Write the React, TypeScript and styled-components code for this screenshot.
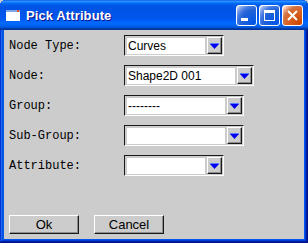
import React from "react";
import styled, { createGlobalStyle } from "styled-components";

const Global = createGlobalStyle`
  html, body { margin: 0; padding: 0; background: #cccccc; }
  body { width: 308px; height: 243px; overflow: hidden; }
`;

const Window = styled.div`
  width: 308px;
  height: 243px;
  box-sizing: border-box;
  display: flex;
  flex-direction: column;
  background: #0055ea;
  box-shadow: inset -1px -1px #00138c, inset 1px 1px #0831d9,
    inset -2px -2px #001ea0, inset 2px 2px #166aee,
    inset -3px -3px #003bda, inset 3px 3px #0855dd;
  border-radius: 6px 6px 0 0;
  overflow: hidden;
`;

const TitleBar = styled.div`
  height: 30px;
  flex: none;
  display: flex;
  align-items: center;
  padding: 0 5px 0 6px;
  gap: 6px;
  background: linear-gradient(
    180deg,
    #0058ee 0%,
    #3593ff 4%,
    #288eff 6%,
    #127dff 8%,
    #036ffc 10%,
    #0262ee 14%,
    #0057e5 20%,
    #0054e3 24%,
    #0055eb 56%,
    #005bf5 66%,
    #026afe 76%,
    #0062ef 86%,
    #0052d6 92%,
    #0040ab 94%,
    #003092 100%
  );
`;

const Title = styled.span`
  flex: 1;
  font-family: "Liberation Sans", Arial, sans-serif;
  font-weight: bold;
  font-size: 13px;
  color: #ffffff;
  text-shadow: 1px 1px #0f1089;
  letter-spacing: 0.1px;
`;

const Controls = styled.div`
  display: flex;
  gap: 2px;
`;

const CtlButton = styled.div<{ $close?: boolean }>`
  width: 21px;
  height: 21px;
  box-sizing: border-box;
  border: 1px solid #ffffff;
  border-radius: 3px;
  display: flex;
  align-items: center;
  justify-content: center;
  background: ${(p) =>
    p.$close
      ? "radial-gradient(circle at 90% 90%, #cc4600 0%, #dc6527 55%, #cd7546 70%, #ffccb2 90%, #fff 100%)"
      : "radial-gradient(circle at 90% 90%, #0054e9 0%, #2263d5 55%, #4479e4 70%, #a3bbec 90%, #fff 100%)"};
`;

const Body = styled.div`
  flex: 1;
  margin: 0 4px 4px 4px;
  background: #cccccc;
  display: flex;
  flex-direction: column;
  padding: 5px 5px 5px 5px;
`;

const Form = styled.div`
  display: grid;
  grid-template-columns: 115px auto;
  row-gap: 9px;
  align-items: center;
`;

const Label = styled.span`
  font-family: "Liberation Mono", "Courier New", monospace;
  font-size: 12px;
  color: #000;
`;

const Combo = styled.div<{ $w: number }>`
  width: ${(p) => p.$w}px;
  height: 21px;
  box-sizing: border-box;
  border-style: solid;
  border-width: 1px;
  border-color: #1a1a1a #ffffff #ffffff #1a1a1a;
  padding: 1px;
  display: flex;
  gap: 2px;
  background: #cccccc;
`;

const Field = styled.div`
  flex: 1;
  background: #ffffff;
  margin: 1px 0 0 1px;
  font-family: "Liberation Sans", Arial, sans-serif;
  font-size: 12px;
  line-height: 16px;
  padding-left: 1px;
  color: #000;
  white-space: nowrap;
  overflow: hidden;
`;

const Arrow = styled.div`
  width: 15px;
  flex: none;
  box-sizing: border-box;
  border-style: solid;
  border-width: 1px;
  border-color: #ffffff #1a1a1a #1a1a1a #ffffff;
  box-shadow: inset -1px -1px #8c8c8c;
  display: flex;
  align-items: center;
  justify-content: center;
  background: #cccccc;
`;

const Buttons = styled.div`
  margin-top: auto;
  display: flex;
  gap: 15px;
`;

const PushButton = styled.button`
  width: 70px;
  height: 19px;
  box-sizing: border-box;
  padding: 0;
  border-style: solid;
  border-width: 1px;
  border-color: #ffffff #1a1a1a #1a1a1a #ffffff;
  box-shadow: inset -1px -1px #8c8c8c;
  background: #cccccc;
  font-family: "Liberation Sans", Arial, sans-serif;
  font-size: 13px;
  color: #000;
  line-height: 16px;
`;

const DownArrow = () => (
  <svg width="9" height="6" viewBox="0 0 9 6">
    <polygon points="0,1 9,1 4.5,6" fill="#0000ee" />
    <rect x="0" y="0" width="9" height="1" fill="#5a7cff" />
  </svg>
);

const rows: { label: string; value: string; w: number }[] = [
  { label: "Node Type:", value: "Curves", w: 100 },
  { label: "Node:", value: "Shape2D 001", w: 130 },
  { label: "Group:", value: "--------", w: 120 },
  { label: "Sub-Group:", value: "", w: 120 },
  { label: "Attribute:", value: "", w: 100 },
];

export default function App() {
  return (
    <>
      <Global />
      <Window>
        <TitleBar>
          <svg width="14" height="11" viewBox="0 0 14 11">
            <rect x="0" y="0" width="14" height="11" fill="#ffffff" />
            <rect x="0" y="0" width="14" height="2" fill="#7fa6e8" />
            <rect x="11" y="0" width="2" height="2" fill="#e05030" />
          </svg>
          <Title>Pick Attribute</Title>
          <Controls>
            <CtlButton>
              <svg width="19" height="19" viewBox="0 0 19 19">
                <rect x="4" y="12" width="7" height="3" fill="#fff" />
              </svg>
            </CtlButton>
            <CtlButton>
              <svg width="19" height="19" viewBox="0 0 19 19">
                <rect x="4.5" y="4.5" width="10" height="10" fill="none" stroke="#fff" strokeWidth="1" />
                <rect x="4" y="4" width="11" height="3" fill="#fff" />
              </svg>
            </CtlButton>
            <CtlButton $close>
              <svg width="19" height="19" viewBox="0 0 19 19">
                <path d="M5 5 L14 14 M14 5 L5 14" stroke="#fff" strokeWidth="2" />
              </svg>
            </CtlButton>
          </Controls>
        </TitleBar>
        <Body>
          <Form>
            {rows.map((r) => (
              <React.Fragment key={r.label}>
                <Label>{r.label}</Label>
                <Combo $w={r.w}>
                  <Field>{r.value}</Field>
                  <Arrow>
                    <DownArrow />
                  </Arrow>
                </Combo>
              </React.Fragment>
            ))}
          </Form>
          <Buttons>
            <PushButton>Ok</PushButton>
            <PushButton>Cancel</PushButton>
          </Buttons>
        </Body>
      </Window>
    </>
  );
}
